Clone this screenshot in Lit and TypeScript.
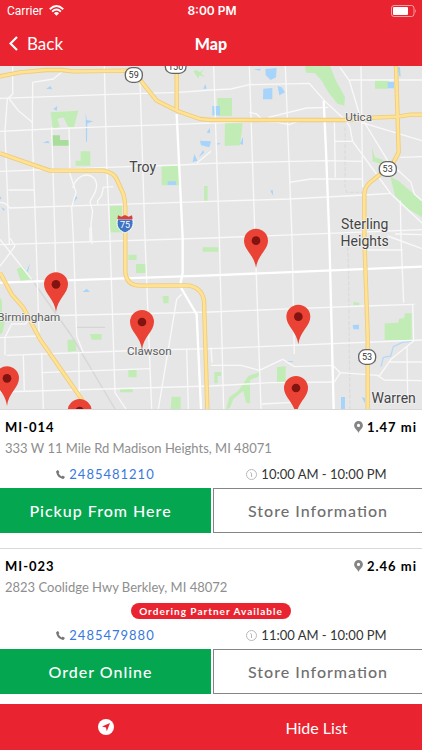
import { LitElement, html, svg, css, nothing } from "lit";
import { customElement, property } from "lit/decorators.js";

interface Store {
  id: string;
  distance: string;
  address: string;
  phone: string;
  hours: string;
  action: string;
  badge?: string;
}

const STORES: Store[] = [
  {
    id: "MI-014",
    distance: "1.47 mi",
    address: "333 W 11 Mile Rd Madison Heights, MI 48071",
    phone: "2485481210",
    hours: "10:00 AM - 10:00 PM",
    action: "Pickup From Here",
  },
  {
    id: "MI-023",
    distance: "2.46 mi",
    address: "2823 Coolidge Hwy Berkley, MI 48072",
    phone: "2485479880",
    hours: "11:00 AM - 10:00 PM",
    action: "Order Online",
    badge: "Ordering Partner Available",
  },
];

// Map artwork is drawn at three units per screen pixel.
const LOCAL_ROADS = [
  "M0 103 313 92 535 85 633 78 693 75 748 62 928 58 978 115 1038 170 1050 190 1058 232 1173 390 1266 477",
  "M0 202 145 195 320 188 535 181 633 177 763 172 833 175 868 182 898 170",
  "M0 322 320 310 540 303 633 298 973 290 1088 292",
  "M0 415 15 418 30 432 330 422 633 412 868 405 1093 393 1173 388",
  "M0 542 633 522 1266 497",
  "M110 756 633 744 883 734 1093 726 1243 721",
  "M20 874 450 858 633 854 1266 828",
  "M0 821 115 816 M125 926 450 914",
  "M0 984 633 966 813 956 1003 954",
  "M633 904 723 904 778 919 848 886 883 908 998 904 1021 926 1003 954 M1021 926 1133 934 1153 948 1266 950",
  "M38 6V90L22 105 15 200 28 540",
  "M98 55 97 215 108 522 117 806 M125 866 130 1035",
  "M155 190 165 522 167 630 M270 490V535",
  "M207 190 210 330 228 385 215 430 220 522 230 816 250 866",
  "M313 6 320 300 330 522 345 986 378 1035",
  "M420 50 435 522 455 1035",
  "M641 6 658 522 671 1035 M748 6 765 522 783 1035 M856 6 876 522 883 870",
  "M1003 165 1006 340 M1003 232H1058 M1083 6 1088 370",
  "M1020 10 1048 50 1078 150 1163 290 1233 355 1243 390 1266 410",
  "M1048 48H1266 M1083 175 1266 230 M1201 280 1266 278 M868 355 933 345 1088 345 M748 145 770 150 785 165 M805 160 920 132 985 130",
  "M1201 410 1203 520 1211 716 M1103 558H1208 M1163 516 1266 554 M1185 510 1266 512",
  "M1238 721 1241 831 1173 886 1138 936 M1168 894H1266 M1221 846 1223 1010 M1103 830 1115 836",
  "M98 55 160 45 185 25 M28 105 55 140 97 175 M25 378H105",
  "M218 372C232 320 290 322 290 366 288 395 272 400 270 415L278 440 273 480 276 540",
  "M340 368 310 370 305 395 293 410V422 M590 298 633 262",
  "M0 526 95 646 M45 546 35 560 0 606 M30 522 45 546",
  "M15 874V820L35 780H75L100 760 M70 874 73 984 M236 866 238 984 M633 850 636 896",
  "M545 691 530 706 475 1035 M560 856 565 1035 M785 1020 880 1015",
];
const ARTERIALS = [
  "M0 656 633 634 1266 608",
  "M971 110 978 260 988 522 1001 1035",
  "M548 522V626L540 666 590 751 603 1035 M530 150 548 522",
];
const HIGHWAYS = [
  "M0 37 60 25 140 18H185L220 22 380 20 410 35 470 110 530 140 600 165 633 168 1038 168 1120 161 1193 158 1233 152H1266",
  "M530 20V140",
  "M0 268 150 320H310Q340 325 350 345L370 390Q376 410 376 440V626Q380 664 420 665L560 664Q605 668 612 710L622 1035",
  "M1188 6 1196 265 1178 300 1123 345Q1093 365 1093 390V520L1103 816V1035",
  "M0 626 35 691 70 731 120 826 245 1006 262 1035",
];
const PARKS = [
  "M152 145 235 140 222 190H205L190 160 172 165 180 190 158 192Z",
  "M242 262H271V305H227V290H242Z",
  "M485 305H538V364H485Z M612 366H623V410H612Z",
  "M580 22 590 18 600 25 615 12 603 28 615 40 598 34 595 44Z",
  "M652 102H696V156H652Z M675 178H728L720 244 674 246Z",
  "M915 6H990L1008 50 1035 100 1033 125 1013 120 985 85 965 50 945 28 918 26Z",
  "M1125 48H1165V74H1125Z M1171 338 1195 350 1230 380 1266 410V460L1225 435 1185 395Z",
  "M1116 250 1125 280 1150 288 1142 300 1118 292Z",
  "M50 616 68 606 95 646 62 652Z M270 810H305V827H275Z M202 828 225 826 230 860 204 864Z",
  "M385 572H410V588H385Z M408 600H438V627H408Z M608 550H655V563H608Z M488 696H506V718H490Z",
  "M385 918H410V940H385Z M360 973H398V985H360Z M515 998H542V1035H512Z",
  "M1154 778 1195 776 1197 764 1213 762 1215 748H1235V828H1154Z",
  "M643 924H663V936H653V958H643Z M831 910 857 906V956H831Z M678 1035 688 1000 715 980 745 936 780 924 775 938 750 948V1018L738 1016 730 980 700 1005 690 1032Z",
  "M0 700 6 712V760L14 775 8 805 0 812Z M1060 714 1078 716V724H1060Z",
];
const WATER = [
  "M138 74 152 66 156 76Z M160 135 172 126 170 140Z M128 236 145 230 148 238Z",
  "M257 145 260 168 280 172 262 178 261 235 258 232Z M218 418 228 396 232 402Z M197 452 206 430 204 436Z",
  "M503 352H528V363H503Z M610 74 616 60 620 74Z M578 294 583 270 592 290Z",
  "M600 230 633 232 628 250 603 244Z M596 280 610 258 612 266Z M620 205 630 192V208Z M655 236 662 240 648 242Z",
  "M637 126 660 126V154H637Z M796 15 830 12 828 40 812 48 797 34Z M790 74 817 72V106H789Z M833 66 845 70 855 85 838 94Z",
  "M1163 54H1182V73H1163Z M1192 8 1200 10 1202 38 1197 35Z M811 380 818 378 820 396Z",
  "M0 396 5 404 0 406Z M4 430 15 436 10 440Z M80 622 90 596 84 624Z M248 684 260 674 270 684Z",
  "M1058 783 1077 782V796H1060Z M1023 999H1035V1035H1023Z M843 890 880 892 878 895Z M1085 1000 1095 1002V1018Z",
  "M720 240 729 218V242Z M760 16 782 14 780 20Z",
];
const PINS = [
  [168, 661],
  [426, 774],
  [21, 943],
  [239, 1041],
  [768, 530],
  [895, 758],
  [888, 972],
];

@customElement("store-map")
class StoreMap extends LitElement {
  static styles = css`
    :host {
      display: block;
      overflow: hidden;
      background: #e6e6e6;
    }
    svg {
      display: block;
      width: 100%;
      height: 100%;
    }
    path {
      stroke-linejoin: round;
    }
    .local { fill: none; stroke: #f9f9f9; stroke-width: 4; }
    .arterial { fill: none; stroke: #fff; stroke-width: 7; }
    .rail { fill: none; stroke: #d6d6d6; stroke-width: 4; }
    .casing { fill: none; stroke: #eecb78; stroke-width: 13; }
    .highway { fill: none; stroke: #ffe294; stroke-width: 8; }
    .park { fill: #c2ecb6; }
    .grove { fill: #a9dd9c; }
    .water { fill: #a6d4fb; }
    .stream { fill: none; stroke: #b5d8f8; stroke-width: 4; }
    .shield { fill: #fff; stroke: #666; stroke-width: 4; }
    .pin { fill: #ea4335; }
    .dot { fill: #811411; }
    text {
      font-family: Roboto, "Liberation Sans", sans-serif;
      text-anchor: middle;
      fill: #5c5c5c;
      stroke: #f1f1f1;
      stroke-width: 5;
      paint-order: stroke;
      font-size: 35px;
    }
    .city { font-size: 42px; fill: #444; }
    .route { font-size: 27px; fill: #333; stroke: none; }
    .interstate { font-size: 27px; fill: #fff; stroke: none; }
  `;

  render() {
    return html`
      <svg viewBox="0 6 1266 1029" preserveAspectRatio="xMidYMin slice" role="img" aria-label="Map of nearby stores">
        ${PARKS.map((d) => svg`<path class="park" d=${d} />`)}
        <path class="park" d="M330 426H366V505H330Z" />
        <path class="grove" d="M156 214H180V228H207V245H156Z" />
        ${WATER.map((d) => svg`<path class="water" d=${d} />`)}
        <path class="stream" d="M1143 908 1150 880 1172 876 1180 848 1210 834 1235 832" />
        <path class="rail" d="M95 646 215 816 345 1035 M230 790H315" />
        <path class="rail" d="M1035 190V365L1040 385H1090 M1040 516 1045 590 1050 1035" stroke-dasharray="12 5" opacity=".6" />
        ${LOCAL_ROADS.map((d) => svg`<path class="local" d=${d} />`)}
        ${ARTERIALS.map((d) => svg`<path class="arterial" d=${d} />`)}
        ${HIGHWAYS.map((d) => svg`<path class="casing" d=${d} />`)}
        ${HIGHWAYS.map((d) => svg`<path class="highway" d=${d} />`)}

        <rect class="shield" x="376" y="11" width="51" height="44" rx="20" />
        <text class="route" x="401" y="43">59</text>
        <rect class="shield" x="496" y="-18" width="62" height="46" rx="20" />
        <text class="route" x="527" y="19">150</text>
        <rect class="shield" x="1138" y="293" width="51" height="44" rx="20" />
        <text class="route" x="1163" y="325">53</text>
        <rect class="shield" x="1076" y="857" width="51" height="44" rx="20" />
        <text class="route" x="1101" y="889">53</text>
        <path
          fill="#3f73c4"
          stroke="#fff"
          stroke-width="3"
          d="M353 465H398C402 485 397 497 375 507 353 497 348 485 353 465Z"
        />
        <path fill="#d9413f" d="M354 454 364 458 375 453 386 458 396 454 398 466H352Z" />
        <text class="interstate" x="375" y="493">75</text>

        <text class="city" x="428" y="323">Troy</text>
        <text x="1076" y="171">Utica</text>
        <text class="city" x="1094" y="495">Sterling</text>
        <text class="city" x="1094" y="545">Heights</text>
        <text x="86" y="771">Birmingham</text>
        <text x="448" y="872">Clawson</text>
        <text class="city" x="1181" y="1017">Warren</text>

        ${PINS.map(
          ([x, y]) => svg`<g transform="translate(${x} ${y})">
            <path class="pin" d="M0 83C-4 44-36 28-36 0A36 36 0 0 1 36 0C36 28 4 44 0 83Z" />
            <circle class="dot" r="13" />
          </g>`,
        )}
      </svg>
    `;
  }
}

@customElement("store-card")
class StoreCard extends LitElement {
  @property({ attribute: false }) store!: Store;

  static styles = css`
    :host {
      display: block;
      padding: 8px 0 15px;
      border-top: 1px solid #d8d8d8;
      background: #fff;
    }
    :host(:last-of-type) {
      padding-bottom: 10px;
    }
    .heading {
      display: flex;
      align-items: center;
      justify-content: space-between;
      padding: 0 5px;
      font-size: 13px;
      line-height: 18px;
      font-weight: 700;
      letter-spacing: 1px;
      color: #000;
    }
    h2 {
      margin: 0;
      font: inherit;
    }
    .distance {
      display: flex;
      align-items: center;
      gap: 4px;
    }
    .address {
      margin: 0;
      padding: 0 5px;
      font-size: 13px;
      line-height: 24px;
      color: #8e8e8e;
    }
    .badge {
      width: max-content;
      margin: 4px auto 2px;
      padding: 0 8px;
      border-radius: 8px;
      background: #e92430;
      color: #fff;
      font-size: 10px;
      font-weight: 700;
      line-height: 16px;
      letter-spacing: 1px;
    }
    .contact,
    .actions {
      display: grid;
      grid-template-columns: 1fr 1fr;
    }
    .contact {
      font-size: 13px;
      line-height: 28px;
    }
    .cell {
      display: flex;
      align-items: center;
      justify-content: center;
      gap: 4px;
      color: #333;
    }
    .cell a {
      color: #3878dc;
      letter-spacing: 1px;
      text-decoration: none;
    }
    button {
      height: 45px;
      margin: 0;
      padding: 0;
      border: 0;
      font: 500 16px Lato, sans-serif;
      font-feature-settings: "liga" 1;
      letter-spacing: 1px;
      cursor: pointer;
    }
    .primary {
      padding-right: 10px;
      background: #04a650;
      color: #fff;
    }
    .secondary {
      margin-left: 2px;
      border: 1px solid #858585;
      border-right: 0;
      background: #fff;
      color: #6f6f6f;
    }
    svg {
      flex: none;
      display: block;
    }
  `;

  render() {
    const s = this.store;
    return html`
      <div class="heading">
        <h2>${s.id}</h2>
        <span class="distance">
          <svg width="9" height="12" viewBox="0 0 9 12" aria-hidden="true">
            <path
              fill="#858585"
              fill-rule="evenodd"
              d="M4.5 0A4.4 4.4 0 0 0 .1 4.4C.1 7.3 3.6 9 4.5 12 5.4 9 8.9 7.3 8.9 4.4A4.4 4.4 0 0 0 4.5 0ZM4.5 2.8A1.6 1.6 0 1 1 4.5 6 1.6 1.6 0 0 1 4.5 2.8Z"
            />
          </svg>
          ${s.distance}
        </span>
      </div>
      <p class="address">${s.address}</p>
      ${s.badge ? html`<div class="badge">${s.badge}</div>` : nothing}
      <div class="contact">
        <div class="cell">
          <svg width="9" height="9" viewBox="0 0 9 9" aria-hidden="true">
            <path
              fill="#777"
              d="M.3 1.3 1.7.1Q2 0 2.2.2L3.3 1.9Q3.4 2.2 3.2 2.4L2.5 3.1Q3.5 5.2 5.7 6.4L6.5 5.7Q6.7 5.5 7 5.7L8.700 6.800Q9 7 8.800 7.300L7.900 8.600Q7.600 9 7 8.900 1.500 8.200.1 2.100 0 1.600.3 1.300Z"
            />
          </svg>
          <a href="tel:${s.phone}">${s.phone}</a>
        </div>
        <div class="cell">
          <svg width="11" height="11" viewBox="0 0 11 11" aria-hidden="true">
            <g fill="none" stroke="#b8b8b8">
              <circle cx="5.5" cy="5.5" r="5" />
              <path d="M4.300 3.500 5.500 4.200V8" />
            </g>
          </svg>
          <span>${s.hours}</span>
        </div>
      </div>
      <div class="actions">
        <button class="primary">${s.action}</button>
        <button class="secondary">Store Information</button>
      </div>
    `;
  }
}

@customElement("app-root")
class AppRoot extends LitElement {
  static styles = css`
    :host {
      display: flex;
      flex-direction: column;
      height: 100vh;
      font-family: Lato, sans-serif;
      background: #fff;
    }
    header,
    footer {
      flex: none;
      background: #e92430;
      color: #fff;
    }
    .status,
    .nav {
      display: grid;
      grid-template-columns: 1fr auto 1fr;
      align-items: center;
    }
    .status {
      height: 21px;
      padding: 0 5px 0 7px;
      font: 400 12px Roboto, sans-serif;
    }
    .carrier {
      display: flex;
      align-items: center;
      gap: 6px;
    }
    .time {
      font-family: Inter, sans-serif;
      font-weight: 600;
    }
    .battery {
      justify-self: end;
    }
    .nav {
      height: 45px;
      padding: 0 9px;
    }
    .back {
      justify-self: start;
      display: flex;
      align-items: center;
      gap: 9px;
      padding: 0;
      border: 0;
      background: none;
      color: inherit;
      font: 400 17px Lato, sans-serif;
      cursor: pointer;
    }
    h1 {
      margin: 0;
      font-size: 16px;
      font-weight: 900;
    }
    store-map {
      flex: 1;
      min-height: 0;
    }
    .list {
      flex: none;
    }
    footer {
      display: grid;
      grid-template-columns: 1fr 1fr;
      height: 46px;
    }
    footer button {
      display: flex;
      align-items: center;
      justify-content: center;
      padding: 0;
      border: 0;
      background: none;
      color: inherit;
      font: 400 16px Lato, sans-serif;
      cursor: pointer;
    }
    svg {
      display: block;
    }
  `;

  render() {
    return html`
      <header>
        <div class="status">
          <span class="carrier">
            Carrier
            <svg width="15" height="11" viewBox="0 0 15 11" aria-hidden="true">
              <g fill="none" stroke="#fff" stroke-width="1.9">
                <path d="M.8 4.200Q7.500-2 14.200 4.200" />
                <path d="M3.100 6.600Q7.500 2.600 11.900 6.600" />
              </g>
              <path fill="#fff" d="M4.900 8.200Q7.500 6 10.100 8.200L7.500 10.800Z" />
            </svg>
          </span>
          <span class="time">8:00 PM</span>
          <svg class="battery" width="26" height="12" viewBox="0 0 26 12" aria-hidden="true">
            <rect x=".5" y=".5" width="22.5" height="11" rx="2.5" fill="none" stroke="#fff" stroke-opacity=".55" />
            <rect x="2" y="2" width="15" height="8" rx="1" fill="#fff" />
            <path d="M24.300 4Q26 6 24.300 8Z" fill="#fff" fill-opacity=".6" />
          </svg>
        </div>
        <div class="nav">
          <button class="back">
            <svg width="9" height="15" viewBox="0 0 9 15" aria-hidden="true">
              <path d="M8 1 1.500 7.500 8 14" fill="none" stroke="#fff" stroke-width="2.2" />
            </svg>
            Back
          </button>
          <h1>Map</h1>
        </div>
      </header>
      <store-map></store-map>
      <div class="list">${STORES.map((s) => html`<store-card .store=${s}></store-card>`)}</div>
      <footer>
        <button aria-label="Show my location">
          <svg width="16" height="16" viewBox="0 0 16 16" aria-hidden="true">
            <circle cx="8" cy="8" r="8" fill="#fff" />
            <path d="M12 4 8.800 12.200 7.900 8.500 4 7.400Z" fill="#e92430" />
          </svg>
        </button>
        <button>Hide List</button>
      </footer>
    `;
  }
}
